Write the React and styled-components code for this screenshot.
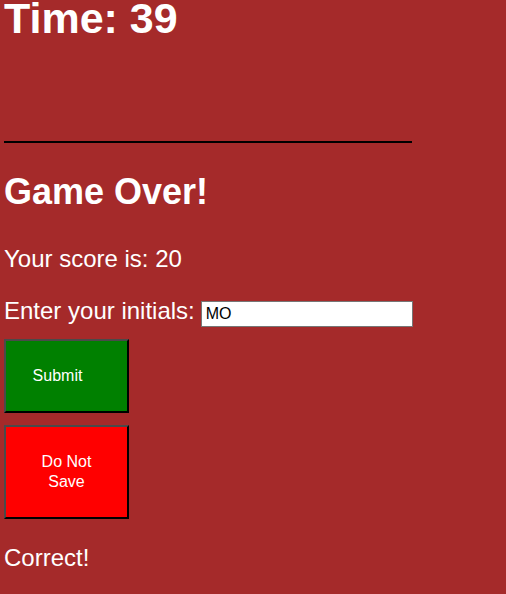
import React from "react"
import styled, { createGlobalStyle } from "styled-components"

const GlobalStyle = createGlobalStyle`
  html, body {
    margin: 0;
    padding: 0;
    background: #a52a2a;
  }
  body {
    font-family: "Liberation Sans", Arial, sans-serif;
    color: #ffffff;
  }
`

export default function App() {
  return (
    <>
      <GlobalStyle />
      <Page>
        <Timer>Time: 39</Timer>
        <Divider />
        <Title>Game Over!</Title>
        <Line $top={37}>Your score is: 20</Line>
        <InitialsRow>
          <Line $top={0}>Enter your initials:</Line>
          <Initials defaultValue="MO" />
        </InitialsRow>
        <Button $bg="#008000" $height={74} $top={12} $shift={18}>
          Submit
        </Button>
        <Button $bg="#ff0000" $height={94} $top={12} $shift={0}>
          Do Not
          <br />
          Save
        </Button>
        <Line $top={27}>Correct!</Line>
      </Page>
    </>
  )
}

const Page = styled.div`
  display: flex;
  flex-direction: column;
  align-items: flex-start;
  padding: 0 4px;
  min-height: 594px;
  box-sizing: border-box;
`
const Timer = styled.h1`
  margin: -3px 0 0;
  font-size: 43px;
  line-height: 43px;
  font-weight: 700;
`
const Divider = styled.div`
  width: 408px;
  height: 2px;
  background: #000000;
  margin-top: 101px;
`
const Title = styled.h2`
  margin: 31px 0 0;
  font-size: 36px;
  line-height: 36px;
  font-weight: 700;
`
const Line = styled.p`
  margin: ${(p) => p.$top}px 0 0;
  font-size: 24px;
  line-height: 24px;
`
const InitialsRow = styled.div`
  display: flex;
  align-items: flex-start;
  gap: 6px;
  margin-top: 28px;
`
const Initials = styled.input`
  margin-top: 2px;
  width: 212px;
  height: 26px;
  box-sizing: border-box;
  border: 1px solid #767676;
  padding: 0 4px;
  font-family: "Liberation Sans", Arial, sans-serif;
  font-size: 16px;
  color: #000000;
  background: #ffffff;
  outline: none;
`
const Button = styled.button`
  margin-top: ${(p) => p.$top}px;
  width: 125px;
  height: ${(p) => p.$height}px;
  box-sizing: border-box;
  padding: 0 ${(p) => p.$shift}px 0 0;
  background: ${(p) => p.$bg};
  color: #ffffff;
  font-family: "Liberation Sans", Arial, sans-serif;
  font-size: 16px;
  line-height: 20px;
  border-style: solid;
  border-width: 2px;
  border-color: #4a4a4a #000000 #000000 #4a4a4a;
  cursor: pointer;
`
